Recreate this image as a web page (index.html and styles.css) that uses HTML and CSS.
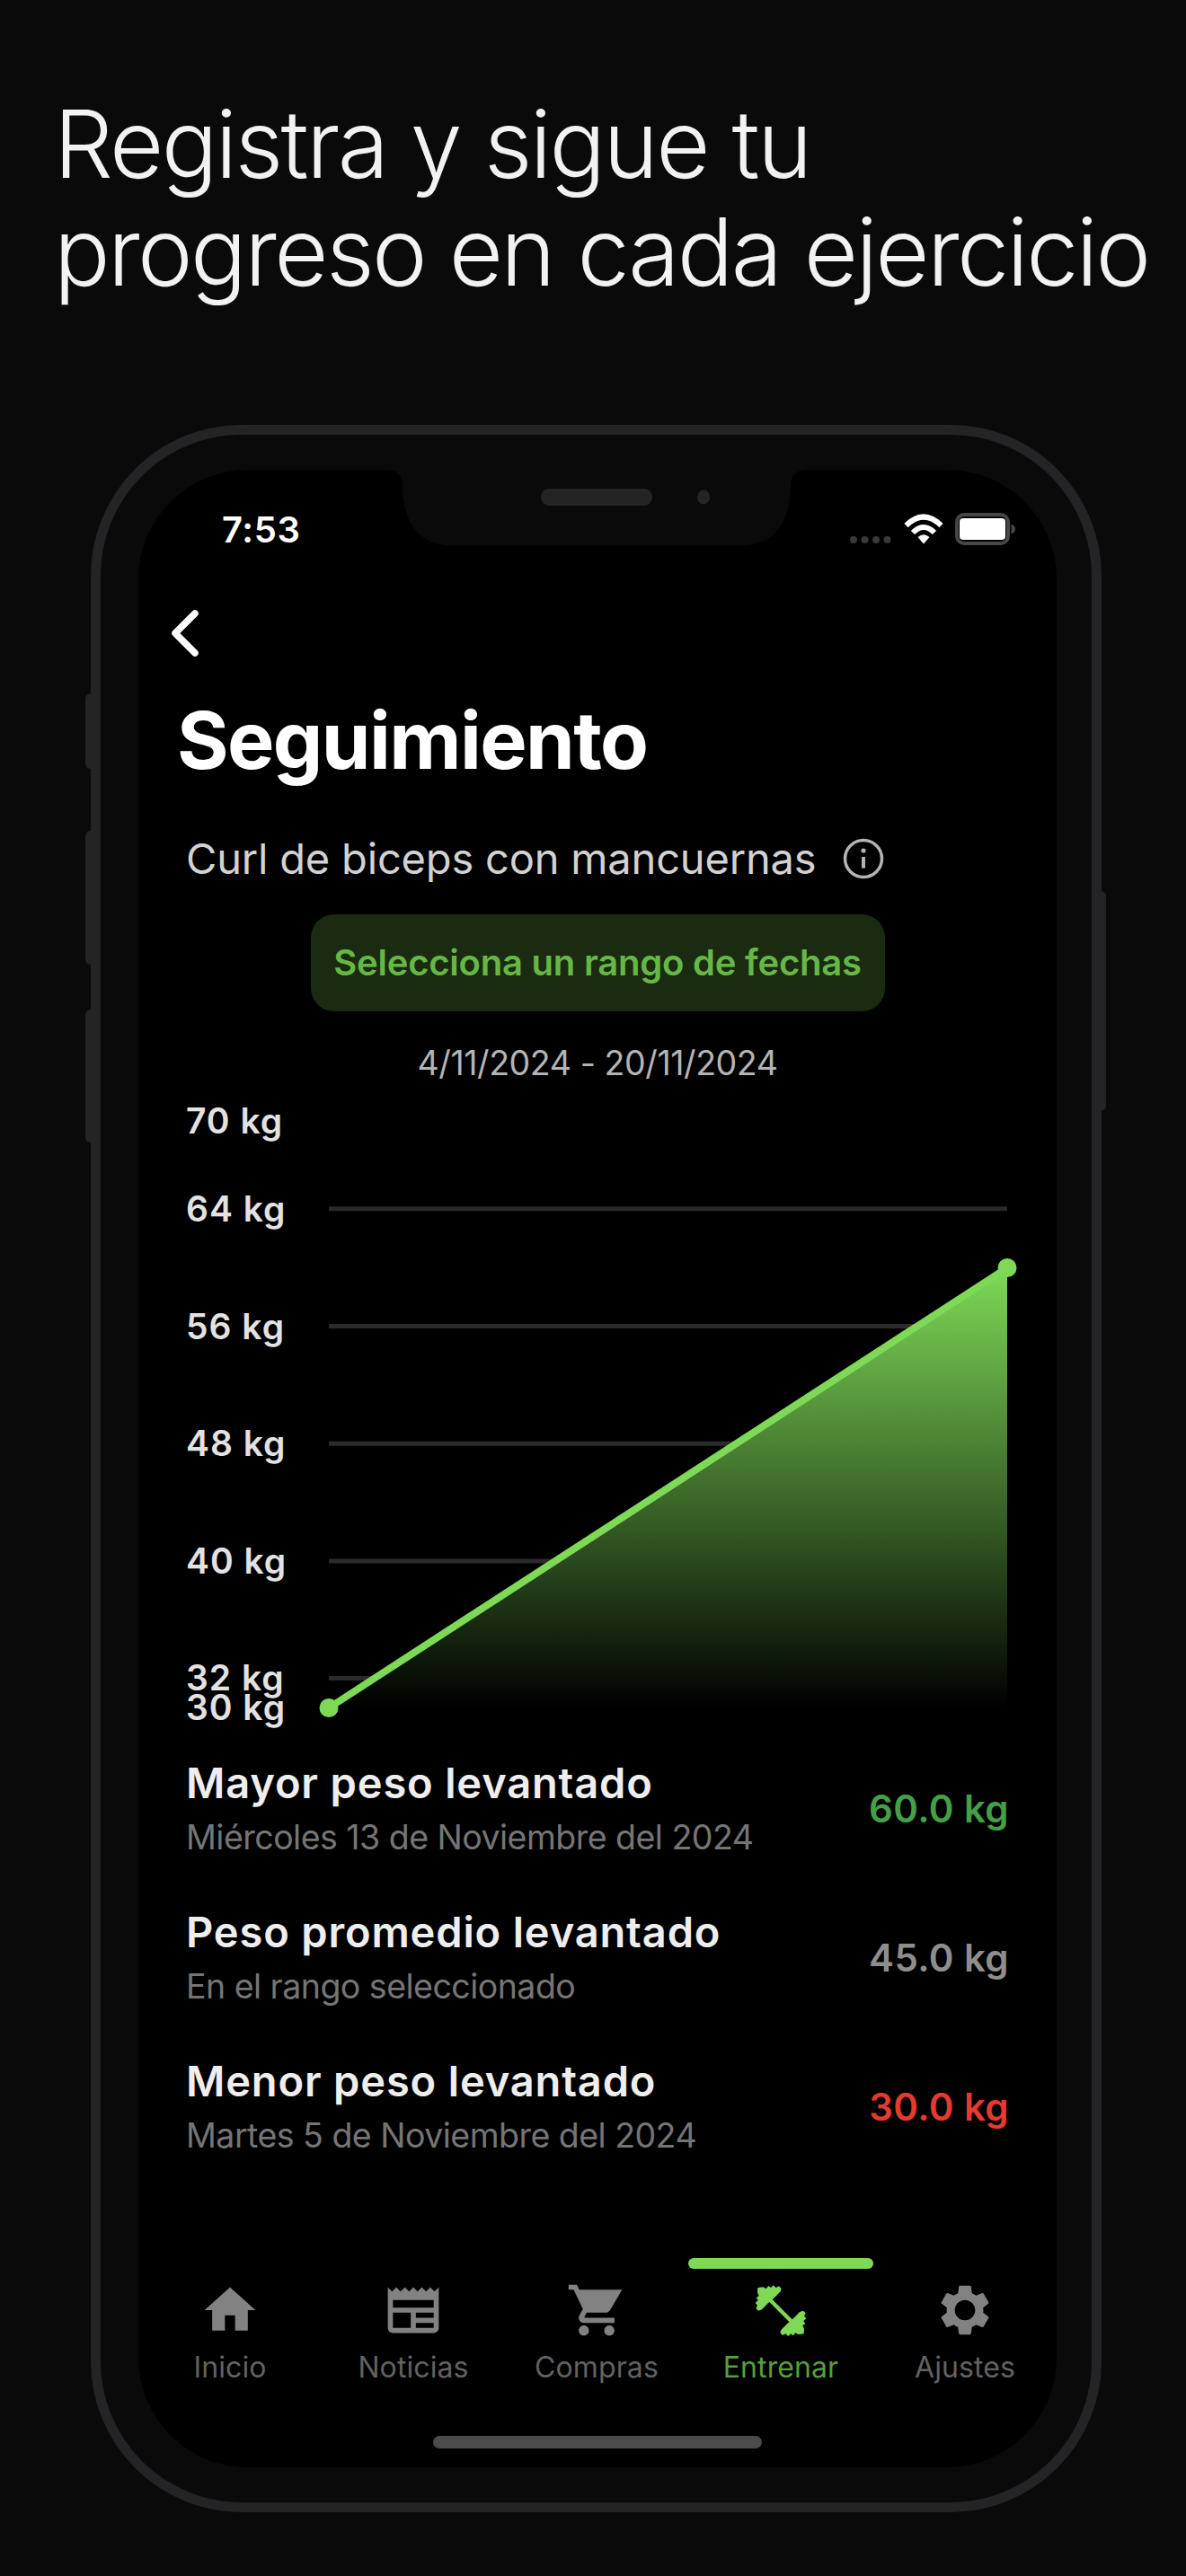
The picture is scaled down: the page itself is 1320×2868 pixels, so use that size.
FILE: index.html
```html
<!DOCTYPE html>
<html lang="es">
<head>
<meta charset="utf-8">
<title>Seguimiento</title>
<link rel="stylesheet" href="styles.css">
</head>
<body>
<h1 class="headline"><span class="line">Registra y sigue tu</span><span class="line">progreso en cada ejercicio</span></h1>
<main class="phone">
  <i class="key key-mute"></i><i class="key key-up"></i><i class="key key-down"></i><i class="key key-power"></i>
  <div class="screen">
    <svg class="notch" viewBox="0 0 468 84"><path d="M0 0H468Q450 0 450 18C450 58 432 84 396 84H72C36 84 18 58 18 18Q18 0 0 0Z" fill="#0a0a0a"/><rect x="172" y="21" width="124" height="19" rx="9" fill="#242326"/><ellipse cx="353" cy="30.500" rx="7" ry="8" fill="#242326"/></svg>
    <header class="status">
      <span class="time">7:53</span>
      <svg class="signal" viewBox="0 0 46 8" fill="#3a3a3a"><circle cx="4" cy="4" r="4"/><circle cx="16.500" cy="4" r="4"/><circle cx="29" cy="4" r="4"/><circle cx="41.500" cy="4" r="4"/></svg>
      <svg class="wifi" viewBox="0 0 44 34"><g fill="none" stroke="#fff" stroke-width="6"><path d="M2.500 13Q22 -6 41.500 13"/><path d="M10 21Q22 9 34 21"/></g><path d="M15.500 26Q22 20.500 28.500 26L22 33.500Z" fill="#fff"/></svg>
      <svg class="battery" viewBox="0 0 68 36"><rect x="2" y="2" width="57" height="32" rx="8" fill="none" stroke="#464646" stroke-width="4"/><rect x="5" y="6" width="51" height="24" rx="4" fill="#fff"/><path d="M62.500 12.500Q67 14 67 18T62.500 23.500Z" fill="#464646"/></svg>
    </header>
    <svg class="back" viewBox="0 0 36 56"><path d="M29 6L7 28L29 50" fill="none" stroke="#fff" stroke-width="7.500" stroke-linecap="round" stroke-linejoin="round"/></svg>
    <h2 class="title">Seguimiento</h2>
    <div class="exercise"><span>Curl de biceps con mancuernas</span>
      <svg class="info" viewBox="0 0 46 46"><circle cx="23" cy="23" r="20.500" fill="none" stroke="#b4b4b4" stroke-width="3.500"/><path d="M23 21V33.500" stroke="#b4b4b4" stroke-width="4"/><circle cx="23" cy="14" r="2.600" fill="#b4b4b4"/></svg>
    </div>
    <button class="range">Selecciona un rango de fechas</button>
    <p class="dates">4/11/2024 - 20/11/2024</p>
    <svg class="chart" viewBox="0 0 1022 724">
      <defs><linearGradient id="fade" x1="0" y1="0" x2="0" y2="1"><stop offset="0" stop-color="#7ed957"/><stop offset="1" stop-color="#7ed957" stop-opacity="0"/></linearGradient></defs>
      <path class="grid" d="M212 138.800H967M212 269.500H967M212 400.200H967M212 531H967M212 661.500H967"/>
      <path d="M212 694.500L967 204.500V694.500Z" fill="#000"/>
      <path d="M212 694.500L967 204.500V694.500Z" fill="url(#fade)"/>
      <path d="M212 694.500L967 204.500" stroke="#7ed957" stroke-width="8"/>
      <circle cx="212" cy="694.500" r="10.500" fill="#7ed957"/><circle cx="967" cy="204.500" r="10.500" fill="#7ed957"/>
      <g class="axis"><text x="53" y="55">70 kg</text><text x="53" y="153">64 kg</text><text x="53" y="284">56 kg</text><text x="53" y="414">48 kg</text><text x="53" y="545">40 kg</text><text x="53" y="675">32 kg</text><text x="53" y="708">30 kg</text></g>
    </svg>
    <section class="stats">
      <div class="stat"><div class="stat-text"><h3>Mayor peso levantado</h3><p>Miércoles 13 de Noviembre del 2024</p></div><b class="best">60.0 kg</b></div>
      <div class="stat"><div class="stat-text"><h3>Peso promedio levantado</h3><p>En el rango seleccionado</p></div><b class="mean">45.0 kg</b></div>
      <div class="stat"><div class="stat-text"><h3>Menor peso levantado</h3><p>Martes 5 de Noviembre del 2024</p></div><b class="least">30.0 kg</b></div>
    </section>
    <nav class="tabs">
      <a class="tab"><svg viewBox="0 0 24 24"><path d="M10 20v-6h4v6h5v-8h3L12 3 2 12h3v8z"/></svg><span>Inicio</span></a>
      <a class="tab"><svg viewBox="0 0 24 24"><path d="M22 3l-1.670 1.670L18.670 3 17 4.670 15.330 3l-1.660 1.670L12 3l-1.670 1.670L8.670 3 7 4.670 5.330 3 3.670 4.670 2 3v16c0 1.100.9 2 2 2h16c1.100 0 2-.9 2-2V3zM11 19H4v-6h7v6zm9 0h-7v-2h7v2zm0-4h-7v-2h7v2zm0-4H4V8h16v3z"/></svg><span>Noticias</span></a>
      <a class="tab"><svg viewBox="0 0 24 24"><path d="M7 18c-1.100 0-1.990.9-1.990 2S5.900 22 7 22s2-.9 2-2-.9-2-2-2zM1 2v2h2l3.600 7.590-1.350 2.450c-.16.28-.25.61-.25.96 0 1.100.9 2 2 2h12v-2H7.420c-.14 0-.25-.11-.25-.25l.03-.12.9-1.630h7.450c.75 0 1.410-.41 1.750-1.030L22 4H5.210l-.94-2H1zm16 16c-1.100 0-1.990.9-1.990 2s.89 2 1.990 2 2-.9 2-2-.9-2-2-2z"/></svg><span>Compras</span></a>
      <a class="tab active"><svg viewBox="-15 -18 204 204"><path d="M50 49L124 123" stroke="#7ed957" stroke-width="13"/><g id="plates"><path d="M89 12L81 4L71 9L62 1L54 9L46 3L38 12L28 7L10 9L9 26L14 36L5 43L11 51L2 60L9 68L4 78L12 86L24 82L42 63L66 42L86 22Z"/></g><use href="#plates" transform="rotate(180 87 86)"/></svg><span>Entrenar</span></a>
      <a class="tab"><svg viewBox="0 0 24 24"><path d="M19.140 12.940c.04-.3.060-.61.060-.94 0-.32-.02-.64-.07-.94l2.030-1.580c.18-.14.230-.41.120-.61l-1.920-3.320c-.12-.22-.37-.29-.59-.22l-2.390.96c-.5-.38-1.030-.7-1.620-.94L14.400 2.810c-.04-.24-.24-.41-.48-.41h-3.840c-.24 0-.43.170-.47.410L9.250 5.350C8.660 5.590 8.120 5.920 7.630 6.290L5.240 5.330c-.22-.08-.47 0-.59.220L2.740 8.870C2.620 9.080 2.660 9.340 2.860 9.480l2.030 1.580C4.840 11.360 4.800 11.690 4.800 12s.02.64.07.94l-2.030 1.580c-.18.14-.23.410-.12.610l1.920 3.320c.12.220.37.290.59.220l2.390-.96c.5.380 1.030.7 1.620.94l.36 2.540c.05.240.24.410.48.410h3.840c.24 0 .44-.17.470-.41l.36-2.540c.59-.24 1.130-.56 1.620-.94l2.390.96c.22.080.47 0 .59-.22l1.920-3.320c.12-.22.070-.47-.12-.61L19.140 12.940zM12 16c-2.200 0-4-1.800-4-4s1.800-4 4-4 4 1.800 4 4-1.800 4-4 4z"/></svg><span>Ajustes</span></a>
    </nav>
    <div class="home-bar"></div>
  </div>
</main>
</body>
</html>
```
FILE: styles.css
```css
* { box-sizing: border-box; margin: 0; padding: 0; }
body { width: 1320px; height: 2868px; overflow: hidden; background: #0a0a0a; color: #fff; font-family: Inter, "Liberation Sans", sans-serif; }
.headline { padding: 100px 0 0 60px; font-size: 104px; font-weight: 300; line-height: 120px; letter-spacing: -2.6px; color: #f2f2f2; white-space: nowrap; }
.line { display: block; }
.phone { position: relative; width: 1125px; height: 2324px; margin: 133px 0 0 101px; border: 11px solid #242326; border-radius: 168px; padding: 39px 39px 39px 42px; }
.key { position: absolute; width: 7px; background: #242326; }
.key-mute { left: -17px; top: 288px; height: 84px; border-radius: 6px 0 0 6px; }
.key-up { left: -17px; top: 441px; height: 149px; border-radius: 6px 0 0 6px; }
.key-down { left: -17px; top: 640px; height: 148px; border-radius: 6px 0 0 6px; }
.key-power { right: -16px; top: 508px; height: 245px; border-radius: 0 6px 6px 0; }
.screen { position: relative; display: flex; flex-direction: column; align-items: flex-start; width: 1022px; height: 2224px; border-radius: 122px; background: #000; }
.notch { position: absolute; left: 276px; top: 0; width: 468px; height: 84px; }
.status { display: flex; width: 100%; height: 91px; padding: 43px 45px 0 93px; }
.time { margin-right: auto; font-size: 40px; line-height: 48px; font-weight: 600; letter-spacing: .6px; }
.signal { width: 46px; height: 8px; margin-top: 31px; }
.wifi { width: 44px; height: 34px; margin: 6px 13px 0 14px; }
.battery { width: 68px; height: 36px; margin-top: 5px; }
.back { width: 36px; height: 56px; margin: 63px 0 0 34px; }
.title { margin: 41px 0 0 43px; font-size: 88px; line-height: 100px; font-weight: 700; letter-spacing: -1.6px; }
.exercise { display: flex; align-items: center; gap: 30px; margin: 54px 0 0 53px; font-size: 47px; line-height: 56px; letter-spacing: -.18px; color: #d2d2d2; white-space: nowrap; }
.info { width: 46px; height: 46px; }
.range { align-self: center; width: 639px; height: 108px; margin-top: 34px; border: 0; border-radius: 26px; background: #1b2b12; color: #66b845; font: 600 40px/48px Inter, sans-serif; letter-spacing: -.22px; white-space: nowrap; }
.dates { align-self: center; margin-top: 35px; font-size: 37.5px; line-height: 46px; letter-spacing: -.42px; color: #b4b4b4; }
.chart { width: 1022px; height: 724px; }
.grid { stroke: #2b2b2b; stroke-width: 5; }
.axis { fill: #e2e2e2; font-size: 39px; font-weight: 600; letter-spacing: 1px; }
.stats { display: flex; flex-direction: column; gap: 54px; width: 100%; margin-top: 26px; padding: 0 53px; }
.stat { display: flex; justify-content: space-between; align-items: center; height: 112px; }
.stat-text { display: flex; flex-direction: column; align-items: flex-start; gap: 10px; white-space: nowrap; }
.stat h3 { font-size: 47px; line-height: 56px; font-weight: 600; letter-spacing: .85px; color: #eee; }
.stat p { font-size: 37.5px; line-height: 46px; letter-spacing: -.52px; color: #757575; }
.stat b { font-size: 42px; font-weight: 600; letter-spacing: .4px; }
.best { color: #43a047; }
.mean { color: #8e8e8e; }
.least { color: #e53a2f; }
.tabs { display: flex; width: 100%; margin-top: 113px; }
.tab { flex: 1; display: flex; flex-direction: column; align-items: center; padding-top: 24px; font-size: 32px; line-height: 40px; letter-spacing: .1px; color: #626262; }
.tab svg { width: 68px; height: 68px; margin-bottom: 10px; fill: #828282; }
.tab.active { color: #569f3c; }
.tab.active::before { content: ""; width: 206px; height: 12px; margin: -24px 0 12px; border-radius: 6px; background: #7ed957; }
.tab.active svg { fill: #7ed957; }
.home-bar { align-self: center; width: 366px; height: 14px; margin-top: 56px; border-radius: 7px; background: #4b4b4b; }
```
